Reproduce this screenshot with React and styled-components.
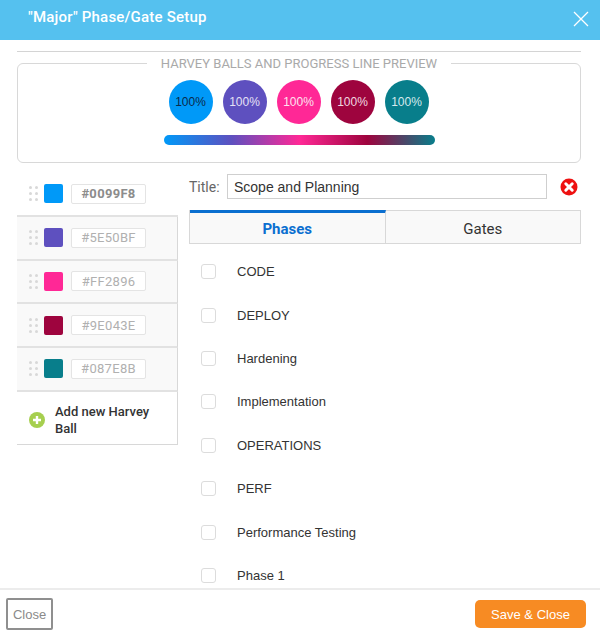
import React from 'react'
import styled, { createGlobalStyle } from 'styled-components'

const balls = [
  { color: '#0099F8', text: '#0b2a4a' },
  { color: '#5E50BF', text: '#e4e0f5' },
  { color: '#FF2896', text: '#fde3ef' },
  { color: '#9E043E', text: '#f0d8e0' },
  { color: '#087E8B', text: '#d5e9ec' },
]

const phases = ['CODE', 'DEPLOY', 'Hardening', 'Implementation', 'OPERATIONS', 'PERF', 'Performance Testing', 'Phase 1']

const App = () => {
  return (
    <Page>
      <GlobalStyle />
      <Header>
        <HeaderTitle>"Major" Phase/Gate Setup</HeaderTitle>
        <CloseIcon viewBox="0 0 16 16" aria-hidden="true">
          <path d="M1 1 L15 15 M15 1 L1 15" />
        </CloseIcon>
      </Header>
      <Body>
        <Rule />
        <Preview>
          <PreviewLegend>Harvey Balls and Progress Line Preview</PreviewLegend>
          <BallRow>
            {balls.map((ball) => (
              <Ball key={ball.color} $color={ball.color} $text={ball.text}>100%</Ball>
            ))}
          </BallRow>
          <ProgressLine />
        </Preview>
        <Columns>
          <BallList>
            {balls.map((ball, i) => (
              <BallItem key={ball.color} $active={i === 0}>
                <DragHandle viewBox="0 0 9 15" aria-hidden="true">
                  <circle cx="1.5" cy="1.5" r="1.5" />
                  <circle cx="7.5" cy="1.5" r="1.5" />
                  <circle cx="1.5" cy="7.5" r="1.5" />
                  <circle cx="7.5" cy="7.5" r="1.5" />
                  <circle cx="1.5" cy="13.5" r="1.5" />
                  <circle cx="7.5" cy="13.5" r="1.5" />
                </DragHandle>
                <Swatch $color={ball.color} />
                <HexField $active={i === 0}>{ball.color}</HexField>
              </BallItem>
            ))}
            <AddItem>
              <AddIcon viewBox="0 0 16 16" aria-hidden="true">
                <circle cx="8" cy="8" r="8" fill="#a6cf4f" />
                <path d="M8 4 V12 M4 8 H12" stroke="#fff" strokeWidth="2.4" />
              </AddIcon>
              <AddLabel>Add new Harvey Ball</AddLabel>
            </AddItem>
          </BallList>
          <Detail>
            <TitleRow>
              <TitleLabel>Title:</TitleLabel>
              <TitleInput defaultValue="Scope and Planning" />
              <RemoveIcon viewBox="0 0 18 18" aria-hidden="true">
                <circle cx="9" cy="9" r="8.5" fill="#ee1111" />
                <path d="M5.8 5.8 L12.2 12.2 M12.2 5.8 L5.8 12.2" stroke="#fff" strokeWidth="3" strokeLinecap="round" />
              </RemoveIcon>
            </TitleRow>
            <Tabs>
              <Tab $active>Phases</Tab>
              <Tab>Gates</Tab>
            </Tabs>
            <PhaseList>
              {phases.map((phase) => (
                <PhaseRow key={phase}>
                  <CheckBox />
                  <PhaseName>{phase}</PhaseName>
                </PhaseRow>
              ))}
            </PhaseList>
          </Detail>
        </Columns>
      </Body>
      <Footer>
        <CloseButton>Close</CloseButton>
        <SaveButton>Save &amp; Close</SaveButton>
      </Footer>
    </Page>
  )
}

export default App

const GlobalStyle = createGlobalStyle`
  html, body {
    margin: 0;
    padding: 0;
    background: #fff;
  }
  * {
    box-sizing: border-box;
  }
`

const Page = styled.div`
  width: 600px;
  height: 635px;
  display: flex;
  flex-direction: column;
  overflow: hidden;
  background: #fff;
  font-family: Roboto, "Liberation Sans", sans-serif;
`

const Header = styled.div`
  flex: none;
  height: 40px;
  display: flex;
  align-items: center;
  justify-content: space-between;
  padding: 0 11px 6px 28px;
  background: #55c1ef;
`

const HeaderTitle = styled.div`
  color: #fff;
  font-size: 15px;
  font-weight: 500;
  letter-spacing: 0.2px;
`

const CloseIcon = styled.svg`
  width: 16px;
  height: 16px;
  margin-top: 3px;
  fill: none;
  stroke: #fff;
  stroke-width: 1.3;
`

const Body = styled.div`
  flex: 1;
  min-height: 0;
  overflow: hidden;
  padding: 11px 19px 0 17px;
`

const Rule = styled.div`
  height: 1px;
  background: #d4d4d4;
`

const Preview = styled.fieldset`
  height: 107px;
  margin: 4px 0 0;
  padding: 0;
  border: 1px solid #d8d8d8;
  border-radius: 6px;
  display: block;
`

const PreviewLegend = styled.legend`
  margin: 0 auto;
  padding: 0 14px;
  color: #a9a9a9;
  font-size: 13px;
  line-height: 15px;
  text-transform: uppercase;
`

const BallRow = styled.div`
  display: flex;
  justify-content: center;
  gap: 10px;
  margin-top: 9px;
  padding-right: 1px;
`

const Ball = styled.div`
  width: 44px;
  height: 44px;
  border-radius: 50%;
  display: flex;
  align-items: center;
  justify-content: center;
  background: ${({ $color }) => $color};
  color: ${({ $text }) => $text};
  font-family: "Liberation Sans", Arial, sans-serif;
  font-size: 12px;
`

const ProgressLine = styled.div`
  width: 271px;
  height: 10px;
  margin: 11px 0 0 146px;
  border-radius: 5px;
  background: linear-gradient(90deg, #0099f8 0%, #5e50bf 25%, #ff2896 50%, #9e043e 75%, #087e8b 100%);
`

const Columns = styled.div`
  display: flex;
  align-items: flex-start;
  margin-top: 8px;
`

const BallList = styled.div`
  flex: none;
  width: 161px;
  margin-top: 2px;
`

const BallItem = styled.div`
  height: 43.75px;
  display: flex;
  align-items: center;
  padding-left: 12px;
  border-bottom: 2px solid #e2e2e2;
  border-right: ${({ $active }) => ($active ? 'none' : '1px solid #d8d8d8')};
  background: ${({ $active }) => ($active ? '#fff' : '#f9f9f9')};
`

const DragHandle = styled.svg`
  flex: none;
  width: 9px;
  height: 15px;
  fill: #d8d8d8;
`

const Swatch = styled.div`
  flex: none;
  width: 19px;
  height: 19px;
  margin-left: 6px;
  border-radius: 2px;
  background: ${({ $color }) => $color};
`

const HexField = styled.div`
  flex: none;
  width: 75px;
  height: 20px;
  margin-left: 8px;
  display: flex;
  align-items: center;
  justify-content: center;
  background: #fff;
  border: 1px solid #e4e4e4;
  border-radius: 2px;
  color: ${({ $active }) => ($active ? '#8c8c8c' : '#b0b0b0')};
  font-size: 13px;
  font-weight: ${({ $active }) => ($active ? 700 : 400)};
  letter-spacing: 0.3px;
`

const AddItem = styled.div`
  height: 53px;
  display: flex;
  align-items: center;
  padding: 4px 0 0 12px;
  border-right: 1px solid #d8d8d8;
  border-bottom: 1px solid #d8d8d8;
`

const AddIcon = styled.svg`
  flex: none;
  width: 16px;
  height: 16px;
`

const AddLabel = styled.div`
  width: 110px;
  margin-left: 10px;
  color: #333;
  font-size: 13px;
  font-weight: 500;
  line-height: 17px;
`

const Detail = styled.div`
  flex: 1;
  min-width: 0;
  margin-left: 11px;
`

const TitleRow = styled.div`
  display: flex;
  align-items: center;
  height: 25px;
  margin-top: 3px;
`

const TitleLabel = styled.label`
  width: 38px;
  color: #666;
  font-size: 14px;
`

const TitleInput = styled.input`
  flex: none;
  width: 320px;
  height: 25px;
  padding: 0 6px;
  border: 1px solid #cfcfcf;
  outline: none;
  color: #333;
  font-family: "Liberation Sans", Arial, sans-serif;
  font-size: 14px;
`

const RemoveIcon = styled.svg`
  flex: none;
  width: 18px;
  height: 18px;
  margin-left: 13px;
`

const Tabs = styled.div`
  display: flex;
  margin-top: 11px;
  height: 34px;
  border: 1px solid #d8d8d8;
  border-top: none;
  background: #f9f9f9;
`

const Tab = styled.div`
  flex: 1;
  display: flex;
  align-items: center;
  justify-content: center;
  padding-top: ${({ $active }) => ($active ? '1px' : '3px')};
  border-top: ${({ $active }) => ($active ? '3px solid #0b6fd0' : '1px solid #d8d8d8')};
  border-right: ${({ $active }) => ($active ? '1px solid #d8d8d8' : 'none')};
  color: ${({ $active }) => ($active ? '#0b6fd0' : '#333')};
  font-size: 15px;
  font-weight: ${({ $active }) => ($active ? 700 : 400)};
`

const PhaseList = styled.div`
  margin-top: 6px;
`

const PhaseRow = styled.div`
  height: 43.4px;
  display: flex;
  align-items: center;
  padding-left: 12px;
`

const CheckBox = styled.span`
  flex: none;
  width: 15px;
  height: 15px;
  border: 1px solid #dcdcdc;
  border-radius: 3px;
`

const PhaseName = styled.span`
  margin-left: 21px;
  color: #333;
  font-family: "Liberation Sans", Arial, sans-serif;
  font-size: 13px;
`

const Footer = styled.div`
  flex: none;
  height: 47px;
  display: flex;
  align-items: center;
  justify-content: space-between;
  padding: 3px 14px 0 6px;
  border-top: 2px solid #ececec;
  background: #fff;
`

const CloseButton = styled.button`
  width: 47px;
  height: 32px;
  padding: 0;
  background: #fff;
  border: 2px solid #8f8f8f;
  border-radius: 2px;
  color: #8a8a8a;
  font-family: "Liberation Sans", Arial, sans-serif;
  font-size: 13px;
`

const SaveButton = styled.button`
  width: 111px;
  height: 28px;
  padding: 0;
  background: #f78b23;
  border: none;
  border-radius: 5px;
  color: #fff;
  font-family: "Liberation Sans", Arial, sans-serif;
  font-size: 13px;
`
